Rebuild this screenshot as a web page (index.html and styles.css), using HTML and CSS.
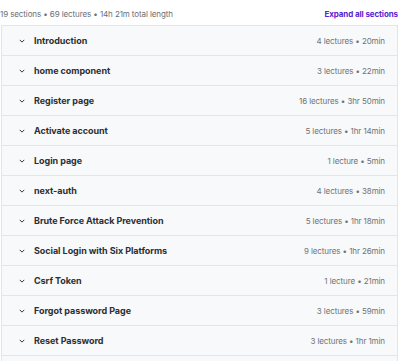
FILE: index.html
```html
<!DOCTYPE html>
<html>
<head>
<meta charset="utf-8">
<link rel="stylesheet" href="styles.css">
</head>
<body>
<div class="curriculum">
  <div class="summary">
    <span class="stats">19 sections • 69 lectures • 14h 21m total length</span>
    <span class="expand">Expand all sections</span>
  </div>
  <div class="sections">
    <div class="section"><svg class="chev" viewBox="0 0 8 5"><path d="M1 1l3 3 3-3"/></svg><span class="title">Introduction</span><span class="meta">4 lectures • 20min</span></div>
    <div class="section"><svg class="chev" viewBox="0 0 8 5"><path d="M1 1l3 3 3-3"/></svg><span class="title">home component</span><span class="meta">3 lectures • 22min</span></div>
    <div class="section"><svg class="chev" viewBox="0 0 8 5"><path d="M1 1l3 3 3-3"/></svg><span class="title">Register page</span><span class="meta">16 lectures • 3hr 50min</span></div>
    <div class="section"><svg class="chev" viewBox="0 0 8 5"><path d="M1 1l3 3 3-3"/></svg><span class="title">Activate account</span><span class="meta">5 lectures • 1hr 14min</span></div>
    <div class="section"><svg class="chev" viewBox="0 0 8 5"><path d="M1 1l3 3 3-3"/></svg><span class="title">Login page</span><span class="meta">1 lecture • 5min</span></div>
    <div class="section"><svg class="chev" viewBox="0 0 8 5"><path d="M1 1l3 3 3-3"/></svg><span class="title">next-auth</span><span class="meta">4 lectures • 38min</span></div>
    <div class="section"><svg class="chev" viewBox="0 0 8 5"><path d="M1 1l3 3 3-3"/></svg><span class="title">Brute Force Attack Prevention</span><span class="meta">5 lectures • 1hr 18min</span></div>
    <div class="section"><svg class="chev" viewBox="0 0 8 5"><path d="M1 1l3 3 3-3"/></svg><span class="title">Social Login with Six Platforms</span><span class="meta">9 lectures • 1hr 26min</span></div>
    <div class="section"><svg class="chev" viewBox="0 0 8 5"><path d="M1 1l3 3 3-3"/></svg><span class="title">Csrf Token</span><span class="meta">1 lecture • 21min</span></div>
    <div class="section"><svg class="chev" viewBox="0 0 8 5"><path d="M1 1l3 3 3-3"/></svg><span class="title">Forgot password Page</span><span class="meta">3 lectures • 59min</span></div>
    <div class="section"><svg class="chev" viewBox="0 0 8 5"><path d="M1 1l3 3 3-3"/></svg><span class="title">Reset Password</span><span class="meta">3 lectures • 1hr 1min</span></div>
    <div class="section empty"></div>
  </div>
</div>
</body>
</html>
```
FILE: styles.css
```css
html, body {
  margin: 0;
  padding: 0;
  background: #ffffff;
  overflow: hidden;
}
body {
  font-family: Inter, "Noto Sans", sans-serif;
  color: #2d2f31;
}
.curriculum {
  width: 400px;
}
.summary {
  height: 25px;
  display: flex;
  align-items: center;
  justify-content: space-between;
  padding: 3px 2px 0 0;
  box-sizing: border-box;
}
.stats {
  font-size: 8px;
  color: #6a6f73;
  letter-spacing: -0.1px;
}
.expand {
  font-size: 8px;
  font-weight: 700;
  color: #5624d0;
  letter-spacing: -0.1px;
}
.sections {
  margin-left: 1px;
  width: 397px;
  border: 1px solid #e2e6e9;
  border-bottom: none;
  box-sizing: border-box;
}
.section {
  height: 30px;
  box-sizing: border-box;
  border-bottom: 1px solid #e2e6e9;
  background: #f7f9fa;
  display: flex;
  align-items: center;
  padding: 0 12px 0 17px;
}
.chev {
  width: 6px;
  height: 4px;
  fill: none;
  stroke: #2d2f31;
  stroke-width: 1.3;
  margin-right: 9px;
  flex: none;
}
.title {
  font-size: 9px;
  font-weight: 700;
  flex: 1;
  letter-spacing: -0.05px;
}
.meta {
  font-size: 8px;
  color: #6f7478;
  letter-spacing: -0.1px;
}
```
